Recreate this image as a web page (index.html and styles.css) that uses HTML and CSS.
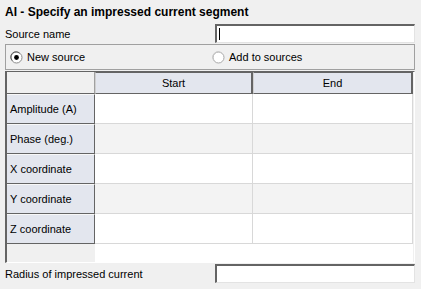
FILE: index.html
```html
<!DOCTYPE html>
<html>
<head>
<meta charset="utf-8">
<link rel="stylesheet" href="styles.css">
</head>
<body>
<div class="panel">
  <div class="title">AI - Specify an impressed current segment</div>
  <div class="field">
    <span class="label">Source name</span>
    <div class="input"><span class="caret"></span></div>
  </div>
  <div class="group">
    <label class="radio radio-new">
      <svg class="radio-icon" width="13" height="13" viewBox="0 0 13 13"><circle cx="6.5" cy="6.5" r="5.5" fill="#fff" stroke="#8c8c8c"/><path d="M2.3 9.5 A5 5 0 0 1 9.5 2.3" fill="none" stroke="#5a5a5a"/><circle cx="6.5" cy="6.5" r="2.4" fill="#000"/></svg>
      <span>New source</span>
    </label>
    <label class="radio radio-add">
      <svg class="radio-icon" width="13" height="13" viewBox="0 0 13 13"><circle cx="6.5" cy="6.5" r="5.5" fill="#fff" stroke="#a8a8a8"/><path d="M2.3 9.5 A5 5 0 0 1 9.5 2.3" fill="none" stroke="#c8c8c8"/></svg>
      <span>Add to sources</span>
    </label>
  </div>
  <div class="pane">
    <div class="grid">
      <div class="corner"></div>
      <div class="colhead">Start</div>
      <div class="colhead last">End</div>

      <div class="rowhead">Amplitude (A)</div>
      <div class="cell white"></div>
      <div class="cell white"></div>

      <div class="rowhead">Phase (deg.)</div>
      <div class="cell grey"></div>
      <div class="cell grey"></div>

      <div class="rowhead">X coordinate</div>
      <div class="cell white"></div>
      <div class="cell white"></div>

      <div class="rowhead">Y coordinate</div>
      <div class="cell grey"></div>
      <div class="cell grey"></div>

      <div class="rowhead">Z coordinate</div>
      <div class="cell white"></div>
      <div class="cell white"></div>

      <div class="filler-left"></div>
      <div class="filler-right"></div>
    </div>
  </div>
  <div class="field field-bottom">
    <span class="label">Radius of impressed current</span>
    <div class="input"></div>
  </div>
</div>
</body>
</html>
```

FILE: styles.css
```css
html, body {
  margin: 0;
  padding: 0;
  background: #f0f0f0;
}

body {
  font-family: "Liberation Sans", Arial, sans-serif;
  font-size: 11px;
  color: #000;
}

.panel {
  display: flex;
  flex-direction: column;
  padding: 3px 6px 0 5px;
  width: 410px;
}

.title {
  font-weight: bold;
  font-size: 12px;
  height: 18px;
  line-height: 18px;
  color: #000;
}

.field {
  display: flex;
  align-items: center;
  height: 19px;
  margin-top: 3px;
}

.label {
  flex: 1;
}

.input {
  width: 200px;
  height: 19px;
  box-sizing: border-box;
  background: #fff;
  border-top: 2px solid #646464;
  border-left: 2px solid #646464;
  border-right: 1px solid #e3e3e3;
  border-bottom: 1px solid #e3e3e3;
  display: flex;
  align-items: center;
  padding-left: 2px;
}

.caret {
  width: 1px;
  height: 12px;
  background: #000;
}

.group {
  margin-top: 1px;
  height: 26px;
  box-sizing: border-box;
  border: 1px solid #a0a0a0;
  display: flex;
  align-items: center;
}

.radio {
  display: flex;
  align-items: center;
  gap: 4px;
}

.radio-new {
  margin-left: 4px;
  width: 202px;
}

.radio-icon {
  display: block;
}

.pane {
  margin-top: 1px;
  height: 192px;
  box-sizing: border-box;
  border-top: 1px solid #646464;
  border-left: 2px solid #646464;
  border-right: 1px solid #ffffff;
  border-bottom: 1px solid #ffffff;
  overflow: hidden;
}

.grid {
  display: grid;
  grid-template-columns: 88px 158px 160px;
  grid-template-rows: 22px repeat(5, 30px) 1fr;
  height: 100%;
}

.corner {
  border-right: 1px solid #a0a0a0;
  border-bottom: 1px solid #646464;
}

.colhead {
  background: #e3e6ee;
  border: 1px solid #646464;
  border-left: 1px solid #d0d0d0;
  border-right: 2px solid #646464;
  display: flex;
  align-items: center;
  justify-content: center;
}

.rowhead {
  background: #e3e6ee;
  border-top: 1px solid #f8f8f8;
  border-right: 1px solid #646464;
  border-bottom: 1px solid #646464;
  display: flex;
  align-items: center;
  padding-left: 3px;
}

.cell {
  border-right: 1px solid #d8d8d8;
  border-bottom: 1px solid #d8d8d8;
}

.white { background: #fff; }
.grey { background: #f3f3f3; }

.filler-right {
  grid-column: 2 / 4;
  background: #fff;
}

.field-bottom {
  margin-top: 1px;
}
```
